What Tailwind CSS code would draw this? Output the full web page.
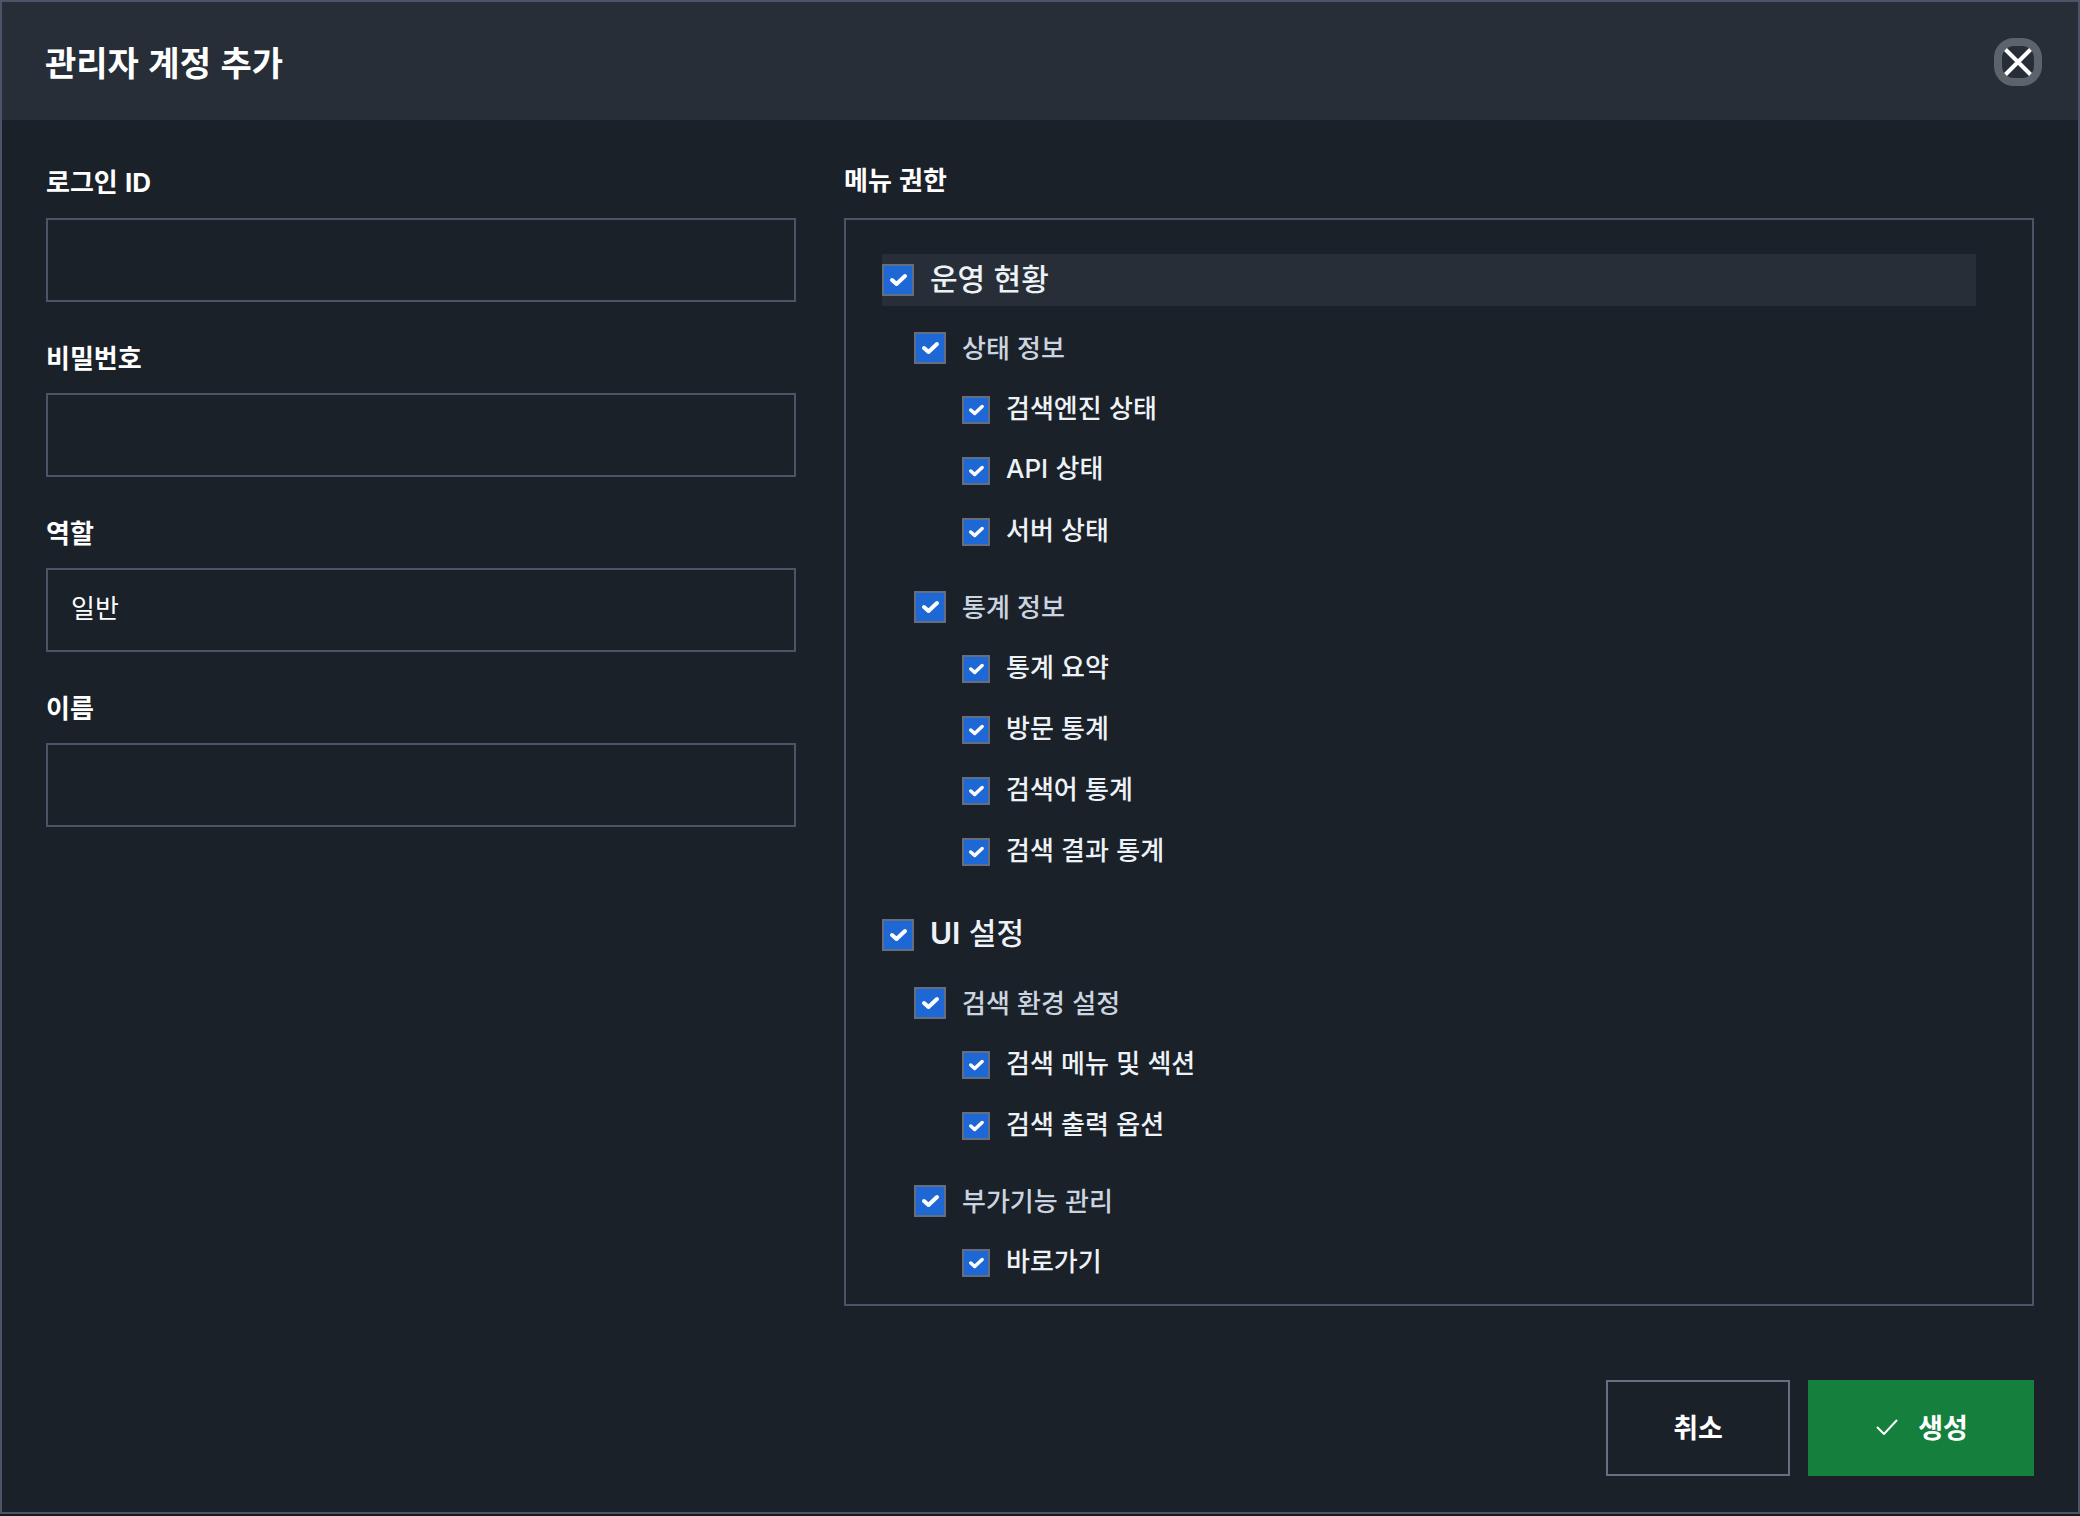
<!DOCTYPE html>
<html lang="ko">
  <head>
    <meta charset="UTF-8" />
    <meta name="viewport" content="width=device-width, initial-scale=1.0" />
    <title>관리자 계정 추가</title>
    <script src="https://cdn.jsdelivr.net/npm/@tailwindcss/browser@4"></script>
  </head>
  <body class="min-h-screen bg-[#15181d] pb-[2px] flex flex-col font-['Noto_Sans_CJK_KR',sans-serif] text-white">
    <div role="dialog" aria-labelledby="dialogTitle" class="grow flex flex-col border-2 border-[#4a5568] bg-[#1b2129]">
      <header class="h-[118px] shrink-0 pt-[2px] pl-[43px] pr-9 flex items-center justify-between bg-[#272e38]">
        <h1 id="dialogTitle" class="text-[34px] leading-[52px] font-bold">관리자 계정 추가</h1>
        <button type="button" aria-label="닫기" class="size-12 rounded-[20px] border-8 border-[#5d636b] flex items-center justify-center">
          <svg class="size-8 shrink-0" viewBox="0 0 32 32" fill="none" stroke="white" stroke-width="4">
            <path d="M3.5 3.5l25 25M28.5 3.5l-25 25" />
          </svg>
        </button>
      </header>
      <form class="grow flex flex-col px-11 pt-10">
        <div class="flex gap-12">
          <div class="w-[750px] shrink-0 flex flex-col gap-[30px]">
            <div class="flex flex-col gap-[14px]">
              <label for="loginId" class="text-[26px] leading-[42px] font-bold">로그인 <span class="font-[Inter]">ID</span></label>
              <input id="loginId" type="text" class="h-[84px] border-2 border-[#4a5568] px-[23px] text-[26px]" />
            </div>
            <div class="flex flex-col gap-3">
              <label for="password" class="text-[26px] leading-[49px] font-bold">비밀번호</label>
              <input id="password" type="password" class="h-[84px] border-2 border-[#4a5568] px-[23px] text-[26px]" />
            </div>
            <div class="flex flex-col gap-3">
              <label for="role" class="text-[26px] leading-[49px] font-bold">역할</label>
              <select id="role" class="h-[84px] appearance-none border-2 border-[#4a5568] px-[23px] pb-2 text-[26px]">
                <option>일반</option>
              </select>
            </div>
            <div class="flex flex-col gap-3">
              <label for="name" class="text-[26px] leading-[49px] font-bold">이름</label>
              <input id="name" type="text" class="h-[84px] border-2 border-[#4a5568] px-[23px] text-[26px]" />
            </div>
          </div>
          <fieldset class="grow min-w-0">
            <legend class="mb-5 text-[26px] leading-[38px] font-bold">메뉴 권한</legend>
            <div id="menuTree" class="h-[1088px] overflow-hidden border-2 border-[#4a5568] pt-[34px] pl-9 pr-14 text-[26px] font-medium text-[#edf2f7]"></div>
          </fieldset>
        </div>
        <div class="mt-[74px] mb-9 flex justify-end gap-[18px] text-[27px] font-bold">
          <button type="button" class="w-[184px] h-24 pb-[2px] border-2 border-[#667085]">취소</button>
          <button type="submit" class="w-[226px] h-24 pb-[2px] pl-[2px] bg-[#15803d] flex items-center justify-center gap-5">
            <svg class="w-[22px] h-4" viewBox="0 0 22 16" fill="none" stroke="white" stroke-width="2">
              <path d="M1 8l7 7L21 1" />
            </svg>
            생성
          </button>
        </div>
      </form>
    </div>
    <script>
      const menus = [
        {
          name: "운영 현황",
          active: true,
          groups: [
            { name: "상태 정보", items: ["검색엔진 상태", "API 상태", "서버 상태"] },
            { name: "통계 정보", items: ["통계 요약", "방문 통계", "검색어 통계", "검색 결과 통계"] },
          ],
        },
        {
          name: "UI 설정",
          groups: [
            { name: "검색 환경 설정", items: ["검색 메뉴 및 섹션", "검색 출력 옵션"] },
            { name: "부가기능 관리", items: ["바로가기"] },
          ],
        },
      ];

      const sizes = {
        lg: "size-8",
        sm: "size-7",
      };

      // Latin words are set in Inter, Hangul keeps the page font
      const text = (name, weight = "") =>
        name.replace(/[A-Z]+/g, `<span class="font-[Inter] ${weight}">$&</span>`);

      const check = (name, size) => `
        <span class="grid shrink-0">
          <input type="checkbox" id="${name}" checked class="peer col-start-1 row-start-1 appearance-none ${sizes[size]} border-2 border-[#646e80] checked:bg-[#1d68d4]" />
          <svg class="col-start-1 row-start-1 ${sizes[size]} pointer-events-none invisible peer-checked:visible" viewBox="0 0 32 32" fill="none" stroke="white" stroke-width="4" stroke-linecap="round" stroke-linejoin="round">
            <path d="M10 16l4.5 4L23 12" />
          </svg>
        </span>`;

      document.getElementById("menuTree").innerHTML = menus
        .map(
          (menu) => `
        <section class="mb-6">
          <div class="h-[52px] flex items-center gap-4 ${menu.active ? "bg-[#272e38]" : ""}">
            ${check(menu.name, "lg")}
            <label for="${menu.name}" class="text-[30px] leading-[46px] pb-[6px]">${text(menu.name, "font-semibold")}</label>
          </div>
          ${menu.groups
            .map(
              (group) => `
          <div class="pl-8 pt-5 pb-[3px]">
            <div class="h-11 flex items-center gap-4">
              ${check(group.name, "lg")}
              <label for="${group.name}" class="leading-10 pb-[2px] text-[#cbd5e0]">${text(group.name)}</label>
            </div>
            <ul class="pl-12 pt-[9px]">
              ${group.items
                .map(
                  (item) => `
              <li class="h-[61px] flex items-center gap-4">
                ${check(item, "sm")}
                <label for="${item}" class="leading-10 pb-[6px]">${text(item)}</label>
              </li>`
                )
                .join("")}
            </ul>
          </div>`
            )
            .join("")}
        </section>`
        )
        .join("");
    </script>
  </body>
</html>
